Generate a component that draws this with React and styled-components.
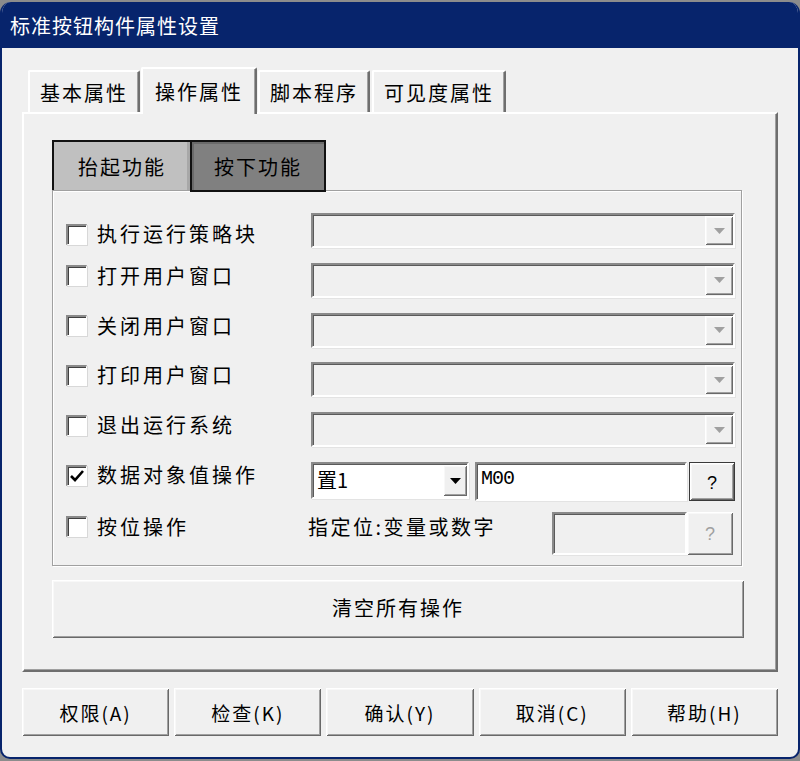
import React from "react";
import styled, { createGlobalStyle, css } from "styled-components";

const GlobalStyle = createGlobalStyle`
  html, body {
    margin: 0;
    padding: 0;
    background: #8c8c8c;
  }
  body {
    font-family: "Noto Sans CJK SC", "Noto Sans", sans-serif;
    color: #000;
  }
`;

const raised = css`
  background: #f0f0f0;
  box-shadow: inset 1px 1px #ffffff, inset -1px -1px #696969,
    inset 2px 2px #f8f8f8, inset -2px -2px #a0a0a0;
`;

const sunken = css`
  border-top: 2px solid #8a8a8a;
  border-left: 2px solid #8a8a8a;
  border-right: 2px solid #ffffff;
  border-bottom: 2px solid #ffffff;
  box-shadow: inset 1px 1px #5a5a5a, 1px 1px #e3e3e3;
`;

const Window = styled.div`
  box-sizing: border-box;
  margin-top: 2px;
  width: 800px;
  height: 757px;
  border: 2px solid #07246c;
  border-top: none;
  border-radius: 11px 11px 10px 10px;
  overflow: hidden;
  background: #f0f0f0;
  display: flex;
  flex-direction: column;
`;

const TitleBar = styled.div`
  height: 46px;
  background: #07246c;
  color: #ffffff;
  font-size: 20px;
  letter-spacing: 1px;
  display: flex;
  align-items: center;
  padding-left: 8px;
  flex-shrink: 0;
`;

const Body = styled.div`
  padding: 19px 20px 20px 20px;
  display: flex;
  flex-direction: column;
`;

const TabStrip = styled.div`
  display: flex;
  align-items: flex-end;
  padding-left: 5px;
  height: 45px;
  position: relative;
  z-index: 1;
`;

const Tab = styled.div`
  box-sizing: border-box;
  height: ${(p) => (p.$active ? "47px" : "42px")};
  padding: 0 ${(p) => (p.$active ? "12px" : "10px")};
  margin: 0 ${(p) => (p.$active ? "0" : "1px")};
  margin-bottom: ${(p) => (p.$active ? "-2px" : "0")};
  font-size: 20px;
  letter-spacing: 2px;
  display: flex;
  align-items: center;
  background: #f0f0f0;
  border-top: 2px solid #ffffff;
  border-left: 2px solid #ffffff;
  border-right: 2px solid #6e6e6e;
  border-radius: 2px 2px 0 0;
  box-shadow: inset -1px 0 #a0a0a0;
`;

const Panel = styled.div`
  box-sizing: border-box;
  height: 560px;
  padding: 26px 34px 32px 28px;
  border-top: 2px solid #ffffff;
  border-left: 2px solid #ffffff;
  border-right: 2px solid #6e6e6e;
  border-bottom: 2px solid #6e6e6e;
  box-shadow: inset -1px -1px #a0a0a0;
  display: flex;
  flex-direction: column;
`;

const SubTabs = styled.div`
  display: flex;
  height: 50px;
  position: relative;
  z-index: 1;
`;

const SubTab = styled.div`
  box-sizing: border-box;
  width: ${(p) => (p.$pressed ? "136px" : "138px")};
  height: ${(p) => (p.$pressed ? "52px" : "50px")};
  background: ${(p) => (p.$pressed ? "#808080" : "#c0c0c0")};
  border: 2px solid #111111;
  border-bottom: ${(p) => (p.$pressed ? "2px solid #111111" : "none")};
  border-right: ${(p) => (p.$pressed ? "2px solid #111111" : "none")};
  box-shadow: ${(p) =>
    p.$pressed ? "inset 2px 2px #6a6a6a" : "inset -3px 0 #a8a8a8"};
  font-size: 20px;
  letter-spacing: 2px;
  display: flex;
  align-items: center;
  justify-content: center;
`;

const Group = styled.div`
  box-sizing: border-box;
  width: 690px;
  height: 376px;
  padding: 20px 8px 10px 13px;
  border: 1px solid #a0a0a0;
  box-shadow: inset 1px 1px #ffffff, 1px 1px #ffffff;
  display: flex;
  flex-direction: column;
`;

const Row = styled.div`
  display: grid;
  grid-template-columns: 245px 1fr;
  align-items: start;
  height: ${(p) => (p.$last ? "auto" : "50px")};
`;

const CheckCell = styled.label`
  display: flex;
  align-items: center;
  gap: 10px;
  margin-top: ${(p) => p.$top || "10px"};
  height: 28px;
`;

const CheckBox = styled.span`
  box-sizing: border-box;
  width: 21px;
  height: 21px;
  background: #ffffff;
  border-top: 2px solid #8a8a8a;
  border-left: 2px solid #8a8a8a;
  border-right: 1px solid #ffffff;
  border-bottom: 1px solid #ffffff;
  box-shadow: inset 1px 1px #404040, 1px 1px #d8d8d8;
  display: flex;
  align-items: center;
  justify-content: center;
`;

const Label = styled.span`
  font-size: 20px;
  letter-spacing: 3px;
  line-height: 28px;
`;

const Controls = styled.div`
  display: flex;
  align-items: flex-start;
  margin-top: 2px;
  gap: ${(p) => p.$gap || "0"};
`;

const Combo = styled.div`
  box-sizing: border-box;
  width: ${(p) => p.$width || "424px"};
  height: ${(p) => p.$height || "35px"};
  background: ${(p) => (p.$disabled ? "#f0f0f0" : "#ffffff")};
  ${sunken};
  display: flex;
  align-items: stretch;
  justify-content: space-between;
`;

const ComboText = styled.span`
  font-family: "Noto Sans CJK SC", "Liberation Serif", serif;
  font-size: 20px;
  padding-left: 4px;
  line-height: 31px;
`;

const DropButton = styled.span`
  box-sizing: border-box;
  width: ${(p) => p.$width || "28px"};
  margin: 1px 0 1px;
  ${raised};
  display: flex;
  align-items: center;
  justify-content: center;
`;

const TextBox = styled.div`
  box-sizing: border-box;
  width: ${(p) => p.$width};
  height: ${(p) => p.$height || "39px"};
  background: ${(p) => (p.$disabled ? "#f0f0f0" : "#ffffff")};
  ${sunken};
  font-family: "Liberation Mono", "DejaVu Sans Mono", monospace;
  font-size: 20px;
  letter-spacing: -1px;
  padding-left: 4px;
  line-height: 30px;
`;

const HelpButton = styled.span`
  box-sizing: border-box;
  width: 46px;
  height: ${(p) => p.$height || "39px"};
  margin-left: ${(p) => p.$offset || "0"};
  ${raised};
  border: ${(p) => (p.$disabled ? "none" : "1px solid #3a3a3a")};
  color: ${(p) => (p.$disabled ? "#a0a0a0" : "#000000")};
  font-family: "Liberation Sans", sans-serif;
  font-size: 18px;
  display: flex;
  align-items: center;
  justify-content: center;
  padding-top: 3px;
`;

const Hint = styled.span`
  font-size: 20px;
  letter-spacing: 2.5px;
  line-height: 28px;
  margin-left: -3px;
  margin-top: 1px;
  width: 244px;
`;

const ClearButton = styled.div`
  box-sizing: border-box;
  width: 692px;
  height: 60px;
  margin-top: 14px;
  ${raised};
  font-size: 20px;
  letter-spacing: 2px;
  display: flex;
  align-items: center;
  justify-content: center;
  padding-bottom: 3px;
`;

const Footer = styled.div`
  display: flex;
  gap: 5px;
  margin-top: 16px;
`;

const FooterButton = styled.div`
  box-sizing: border-box;
  flex: 1;
  height: 48px;
  ${raised};
  font-size: 19px;
  letter-spacing: 2px;
  display: flex;
  align-items: center;
  justify-content: center;
`;

const Arrow = ({ color }) => (
  <svg width="11" height="6" viewBox="0 0 11 6">
    <path d="M0 0 H11 L5.5 6 Z" fill={color} />
  </svg>
);

const Tick = () => (
  <svg width="14" height="12" viewBox="0 0 14 12">
    <path d="M1 6 L5 10 L13 1" stroke="#000" strokeWidth="2.6" fill="none" />
  </svg>
);

const actions = [
  { label: "执行运行策略块", top: "9px" },
  { label: "打开用户窗口", top: "1px" },
  { label: "关闭用户窗口", top: "1px" },
  { label: "打印用户窗口", top: "1px" },
  { label: "退出运行系统", top: "1px" },
];

const footerButtons = ["权限(A)", "检查(K)", "确认(Y)", "取消(C)", "帮助(H)"];

export default function App() {
  return (
    <>
      <GlobalStyle />
      <Window>
        <TitleBar>标准按钮构件属性设置</TitleBar>
        <Body>
          <TabStrip>
            <Tab>基本属性</Tab>
            <Tab $active>操作属性</Tab>
            <Tab>脚本程序</Tab>
            <Tab>可见度属性</Tab>
          </TabStrip>
          <Panel>
            <SubTabs>
              <SubTab>抬起功能</SubTab>
              <SubTab $pressed>按下功能</SubTab>
            </SubTabs>
            <Group>
              {actions.map((a) => (
                <Row key={a.label}>
                  <CheckCell $top={a.top}>
                    <CheckBox />
                    <Label>{a.label}</Label>
                  </CheckCell>
                  <Controls>
                    <Combo $disabled>
                      <span />
                      <DropButton>
                        <Arrow color="#a0a0a0" />
                      </DropButton>
                    </Combo>
                  </Controls>
                </Row>
              ))}
              <Row>
                <CheckCell $top="1px">
                  <CheckBox>
                    <Tick />
                  </CheckBox>
                  <Label>数据对象值操作</Label>
                </CheckCell>
                <Controls $gap="6px">
                  <Combo $width="158px" $height="37px">
                    <ComboText>置1</ComboText>
                    <DropButton $width="24px">
                      <Arrow color="#000000" />
                    </DropButton>
                  </Combo>
                  <TextBox $width="212px">M00</TextBox>
                  <HelpButton $offset="-4px">?</HelpButton>
                </Controls>
              </Row>
              <Row $last>
                <CheckCell $top="3px">
                  <CheckBox />
                  <Label>按位操作</Label>
                </CheckCell>
                <Controls>
                  <Hint>指定位:变量或数字</Hint>
                  <TextBox $width="135px" $height="43px" $disabled />
                  <HelpButton $disabled $height="43px">
                    ?
                  </HelpButton>
                </Controls>
              </Row>
            </Group>
            <ClearButton>清空所有操作</ClearButton>
          </Panel>
          <Footer>
            {footerButtons.map((b) => (
              <FooterButton key={b}>{b}</FooterButton>
            ))}
          </Footer>
        </Body>
      </Window>
    </>
  );
}
